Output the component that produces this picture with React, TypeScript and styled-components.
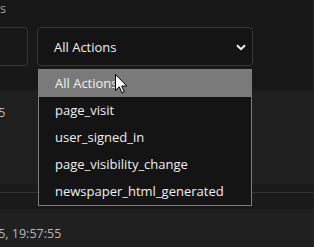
import React from "react";
import styled, { createGlobalStyle } from "styled-components";

const GlobalStyle = createGlobalStyle`
  html, body {
    margin: 0;
    padding: 0;
    background: #181818;
  }
  body {
    font-family: "Open Sans", "Noto Sans", sans-serif;
    overflow: hidden;
  }
`;

const Page = styled.div`
  position: relative;
  box-sizing: border-box;
  width: 514px;
  height: 247px;
  margin-left: -200px;
  border-right: 1px solid #242424;
  background: #181818;
`;

const Header = styled.div`
  width: 206px;
  height: 18px;
  line-height: 18px;
  text-align: right;
  font-size: 12.5px;
  color: #a8a8a8;
  white-space: nowrap;
`;

const FilterRow = styled.div`
  display: grid;
  grid-template-columns: 228px 216px;
  column-gap: 9px;
  height: 39px;
  margin-top: 9px;
`;

const SearchBox = styled.div`
  box-sizing: border-box;
  border: 1px solid #363636;
  border-radius: 4px;
  background: #181818;
`;

const Select = styled.div`
  position: relative;
  box-sizing: border-box;
  display: flex;
  align-items: center;
  justify-content: space-between;
  padding: 0 4px 0 16px;
  border: 1px solid #383838;
  border-radius: 4px;
  background: #141414;
  color: #f0f0f0;
  font-size: 13px;
`;

const Chevron = styled.svg`
  width: 10px;
  height: 7px;
  margin-right: 2px;
  margin-top: 1px;
`;

const Dropdown = styled.ul`
  position: absolute;
  top: calc(100% + 4px);
  left: 0;
  z-index: 2;
  box-sizing: border-box;
  width: 100%;
  margin: 0;
  padding: 0;
  list-style: none;
  border: 1px solid #7c7c7c;
  background: #141414;
`;

const Option = styled.li<{ $active?: boolean }>`
  height: 27px;
  line-height: 27px;
  padding-left: 16px;
  font-size: 13px;
  color: #f0f0f0;
  background: ${(p) => (p.$active ? "#7a7a7a" : "transparent")};
  white-space: nowrap;
`;

const Table = styled.div`
  margin-top: 24px;
`;

const Row = styled.div<{ $bg: string; $height: number; $divider?: boolean }>`
  box-sizing: border-box;
  display: grid;
  grid-template-columns: 139px 1fr;
  align-items: start;
  height: ${(p) => p.$height}px;
  background: ${(p) => p.$bg};
  border-bottom: ${(p) => (p.$divider ? "1px solid #333333" : "none")};
`;

const Cell = styled.div<{ $top?: number }>`
  padding-top: ${(p) => p.$top ?? 0}px;
  line-height: 18px;
  font-size: 12.5px;
  color: #b8b8b8;
  white-space: nowrap;
`;

const Cursor = styled.svg`
  position: absolute;
  left: 315px;
  top: 74px;
  z-index: 3;
  width: 13px;
  height: 20px;
`;

const options = [
  "All Actions",
  "page_visit",
  "user_signed_in",
  "page_visibility_change",
  "newspaper_html_generated",
];

export default function App() {
  return (
    <>
      <GlobalStyle />
      <Page>
        <Header>User Actions</Header>
        <FilterRow>
          <SearchBox />
          <Select>
            <span>All Actions</span>
            <Chevron viewBox="0 0 10 7">
              <path
                d="M1 1.2 L5 5.2 L9 1.2"
                fill="none"
                stroke="#f0f0f0"
                strokeWidth="2"
              />
            </Chevron>
            <Dropdown>
              {options.map((o, i) => (
                <Option key={o} $active={i === 0}>
                  {o}
                </Option>
              ))}
            </Dropdown>
          </Select>
        </FilterRow>
        <Table>
          <Row $bg="#1f1f1f" $height={94}>
            <Cell $top={14}>guest</Cell>
            <Cell $top={14}>12/15/2025</Cell>
          </Row>
          <Row $bg="#1a1a1a" $height={9} $divider />
          <Row $bg="#1a1a1a" $height={16} />
          <Row $bg="#202020" $height={40}>
            <Cell $top={16}>guest</Cell>
            <Cell $top={16}>12/15/2025, 19:57:55</Cell>
          </Row>
        </Table>
        <Cursor viewBox="0 0 13 20">
          <path
            d="M0.5 0.5 L0.5 16.5 L4.3 12.8 L7 19 L9.3 18 L6.7 12 L11.8 12 Z"
            fill="#ffffff"
            stroke="#000000"
            strokeWidth="1"
            strokeLinejoin="miter"
          />
        </Cursor>
      </Page>
    </>
  );
}
